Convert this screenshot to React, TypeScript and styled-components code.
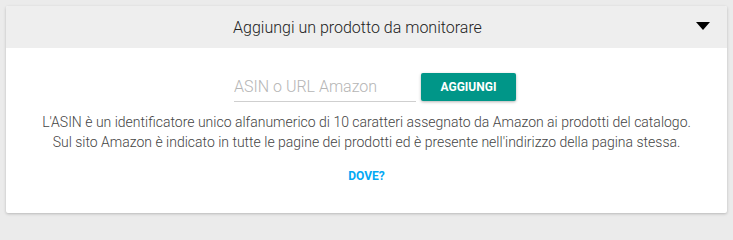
import styled, { createGlobalStyle } from "styled-components";

const GlobalStyle = createGlobalStyle`
    body {
        margin: 0;
        padding: 6px;
        background-color: #ebebeb;
        font-family: Roboto, "Liberation Sans", sans-serif;
    }
`;

const App = () => {
    return (
        <>
            <GlobalStyle />
            <Card>
                <Header>
                    <Title>Aggiungi un prodotto da monitorare</Title>
                    <Arrow />
                </Header>
                <Body>
                    <FormRow>
                        <Input placeholder="ASIN o URL Amazon" />
                        <AddButton>AGGIUNGI</AddButton>
                    </FormRow>
                    <Description>
                        L'ASIN è un identificatore unico alfanumerico di 10 caratteri assegnato da Amazon ai prodotti del catalogo.
                        <br />
                        Sul sito Amazon è indicato in tutte le pagine dei prodotti ed è presente nell'indirizzo della pagina stessa.
                    </Description>
                    <WhereLink href="#">DOVE?</WhereLink>
                </Body>
            </Card>
        </>
    );
};

const Card = styled.div`
    width: 721px;
    background-color: white;
    border-radius: 2px;
    box-shadow: 0 1px 3px rgba(0, 0, 0, 0.22);
    overflow: hidden;
`;

const Header = styled.div`
    display: flex;
    align-items: center;
    height: 42px;
    padding: 0 17px 0 13px;
    background-color: #eeeeee;
`;

const Title = styled.div`
    flex: 1;
    text-align: center;
    font-size: 16px;
    font-weight: 300;
    color: #222;
`;

const Arrow = styled.div`
    width: 0;
    height: 0;
    border-left: 7px solid transparent;
    border-right: 7px solid transparent;
    border-top: 8px solid #000;
    margin-top: -2px;
`;

const Body = styled.div`
    display: flex;
    flex-direction: column;
    align-items: center;
    padding: 23px 0 30px;
`;

const FormRow = styled.div`
    display: flex;
    align-items: center;
    gap: 5px;
    padding-left: 17px;
`;

const Input = styled.input`
    width: 182px;
    height: 31px;
    box-sizing: border-box;
    border: none;
    border-bottom: 1px solid #cfcfcf;
    outline: none;
    padding: 0;
    font-family: Roboto, "Liberation Sans", sans-serif;
    font-size: 16px;
    font-weight: 300;
    color: #333;
    background: transparent;

    &::placeholder {
        color: #b5b5b5;
    }
`;

const AddButton = styled.button`
    width: 95px;
    height: 28px;
    border: none;
    border-radius: 2px;
    background-color: #009688;
    color: white;
    font-family: Roboto, "Liberation Sans", sans-serif;
    font-weight: bold;
    font-size: 12px;
    box-shadow: 0 1px 3px rgba(0, 0, 0, 0.3);
    cursor: pointer;
`;

const Description = styled.p`
    margin: 10px 0 0;
    text-align: center;
    font-size: 14px;
    font-weight: 300;
    line-height: 20px;
    color: #444;
`;

const WhereLink = styled.a`
    margin-top: 17px;
    font-size: 12px;
    font-weight: bold;
    color: #03a9f4;
    text-decoration: none;
`;

export default App;
